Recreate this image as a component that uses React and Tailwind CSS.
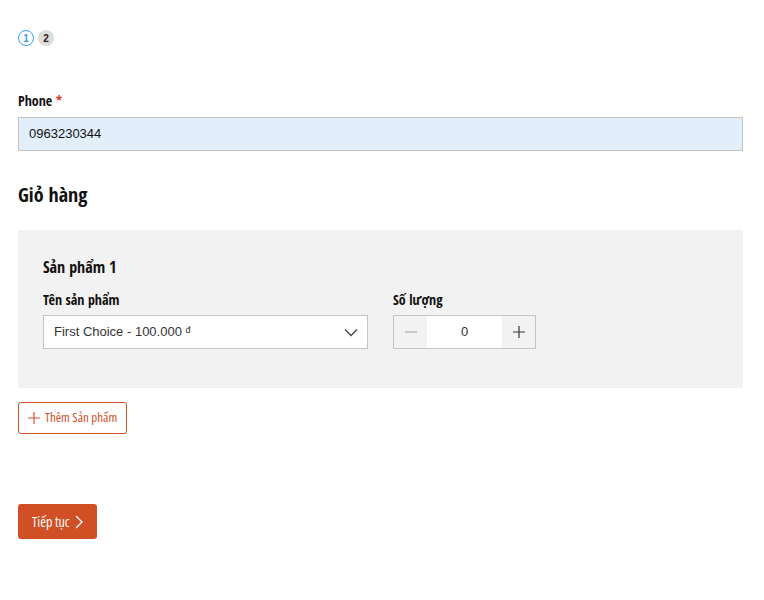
import React from 'react';

const cond = { fontFamily: '"Open Sans Condensed", "Liberation Sans Narrow", "Open Sans", sans-serif', fontStretch: 'condensed' };
const condReg = { fontFamily: '"Open Sans", "Liberation Sans Narrow", sans-serif', fontStretch: '75%', fontWeight: 400 };

export default function App() {
  return (
    <div className="min-h-screen bg-white pl-[18px] pr-[21px] pt-[30px] font-['Liberation_Sans',Arial,sans-serif] text-[#111]">
      <div className="flex items-center gap-[4px]">
        <span className="flex h-[16px] w-[16px] items-center justify-center rounded-full border-[1.5px] border-[#3b99fc] text-[10px] font-bold text-[#3b99fc]">1</span>
        <span className="flex h-[16px] w-[16px] items-center justify-center rounded-full bg-[#dcdcdc] text-[10px] font-bold text-[#222]">2</span>
      </div>

      <div className="mt-[45px]">
        <label className="block text-[14px] font-bold leading-[20px]" style={cond}>
          Phone <span className="text-[#d9342b]">*</span>
        </label>
        <div className="mt-[6px] flex h-[34px] items-center border border-[#c4c4c4] bg-[#e2eefa] px-[10px] text-[13px]">
          0963230344
        </div>
      </div>

      <h2 className="mt-[30px] text-[20px] font-bold leading-[28px]" style={cond}>Giỏ hàng</h2>

      <div className="mt-[21px] bg-[#f2f2f2] pb-[39px] pl-[25px] pr-[24px] pt-[26px]">
        <div className="text-[16px] font-bold leading-[22px]" style={cond}>Sản phẩm 1</div>
        <div className="mt-[12px] flex gap-[25px]">
          <div className="w-[325px]">
            <div className="text-[14px] font-bold leading-[20px]" style={cond}>Tên sản phẩm</div>
            <div className="mt-[5px] flex h-[34px] items-center justify-between border border-[#c4c4c4] bg-white pl-[10px] pr-[8px] text-[13px] text-[#333]">
              <span>First Choice - 100.000 <span className="relative top-[-3px] text-[9px]">đ</span></span>
              <svg width="16" height="16" viewBox="0 0 16 16" fill="none" stroke="#444" strokeWidth="1.3"><path d="M2 5.5l6 6 6-6" /></svg>
            </div>
          </div>
          <div className="w-[143px]">
            <div className="text-[14px] font-bold leading-[20px]" style={cond}>Số lượng</div>
            <div className="mt-[5px] flex h-[34px] border border-[#c4c4c4]">
              <div className="flex w-[33px] items-center justify-center bg-[#f2f2f2]">
                <svg width="14" height="14" viewBox="0 0 14 14" stroke="#aaa" strokeWidth="1.2"><path d="M1 7h12" /></svg>
              </div>
              <div className="flex flex-1 items-center justify-center bg-white text-[13px] text-[#333]">0</div>
              <div className="flex w-[33px] items-center justify-center bg-[#f2f2f2]">
                <svg width="14" height="14" viewBox="0 0 14 14" stroke="#333" strokeWidth="1.2"><path d="M1 7h12M7 1v12" /></svg>
              </div>
            </div>
          </div>
        </div>
      </div>

      <button className="mt-[14px] flex h-[32px] items-center gap-[5px] rounded-[3px] border border-[#d24f27] px-[9px] text-[13px] text-[#d24f27]" style={condReg}>
        <svg width="12" height="12" viewBox="0 0 12 12" stroke="#d24f27" strokeWidth="1.2"><path d="M0 6h12M6 0v12" /></svg>
        Thêm Sản phẩm
      </button>

      <button className="mt-[70px] flex h-[35px] items-center gap-[5px] rounded-[3px] bg-[#d14f24] px-[14px] text-[14px] text-white" style={condReg}>
        Tiếp tục
        <svg width="8" height="14" viewBox="0 0 8 14" fill="none" stroke="white" strokeWidth="1.3"><path d="M1 1l6 6-6 6" /></svg>
      </button>
    </div>
  );
}
